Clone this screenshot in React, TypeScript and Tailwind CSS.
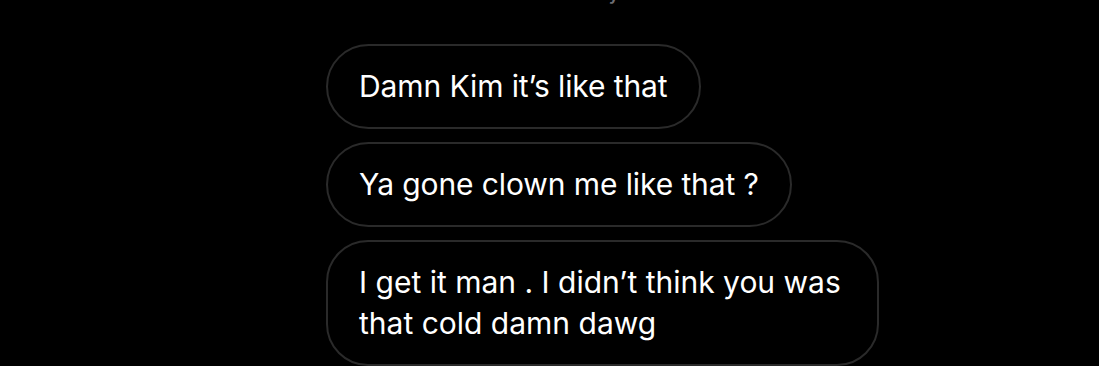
export default function App() {
  const messages = [
    "Damn Kim it’s like that",
    "Ya gone clown me like that ?",
    "I get it man . I didn’t think you was that cold damn dawg",
  ];

  return (
    <div className="h-[366px] w-full overflow-hidden bg-black" style={{ fontFamily: "Inter, 'Noto Sans', sans-serif" }}>
      {/* timestamp, scrolled mostly out of view */}
      <div className="-mt-[16px] h-[20px] pl-[545px] text-[17px] leading-[20px] text-[#6e6e73]">
        <span className="font-semibold">Saturday</span> 10:45 PM
      </div>
      <div className="flex flex-col items-start gap-[13px] pl-[326px] pt-[40px]">
        {messages.map((m, i) => (
          <div
            key={i}
            className={
              i === 2
                ? "w-[553px] rounded-[42px] border-2 border-[#2a2a2a] px-[31px] py-[20px] text-[30px] leading-[41px] text-white"
                : "rounded-full border-2 border-[#2a2a2a] px-[31px] py-[20px] text-[30px] tracking-[-0.1px] leading-[41px] text-white"
            }
          >
            {m}
          </div>
        ))}
      </div>
    </div>
  );
}
